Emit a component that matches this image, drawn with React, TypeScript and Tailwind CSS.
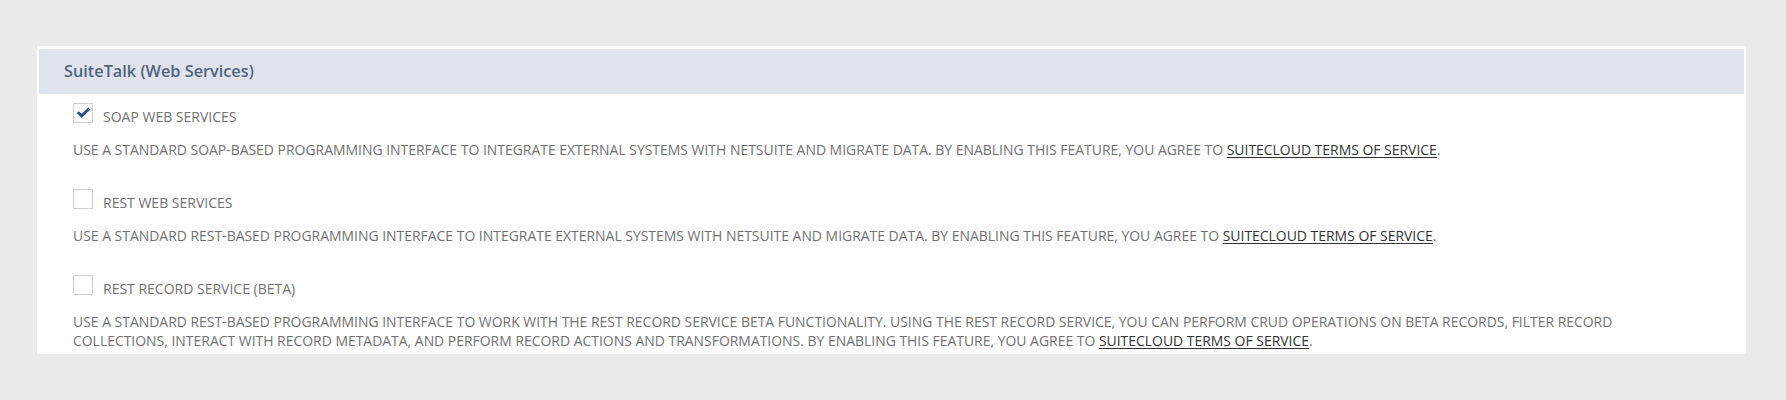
import React from 'react';

interface FeatureRowProps {
    label: string;
    checked?: boolean;
    children: React.ReactNode;
}

const TermsLink = () => (
    <a href="#" className="text-[#333333] underline underline-offset-[2px]">
        SUITECLOUD TERMS OF SERVICE
    </a>
);

const FeatureRow = ({ label, checked, children }: FeatureRowProps) => {
    return (
        <div className="flex flex-col">
            <div className="flex flex-row items-end">
                <span className="relative w-[20px] h-[20px] bg-white border border-[#cfcfcf] shrink-0">
                    {checked && (
                        <svg
                            viewBox="0 0 16 13"
                            className="absolute left-[2px] top-[3px] w-[15px] h-[12px]"
                            fill="#2d4f8e"
                        >
                            <path d="M0.6 6.6 L2.9 4.5 L6 7.4 L13.2 0.6 L15.4 2.8 L6 11.9 Z" />
                        </svg>
                    )}
                </span>
                <span className="ml-[10px] text-[14px] leading-[18px] text-[#717171] -mb-[3px]">{label}</span>
            </div>
            <p className="mt-[17px] text-[13.94px] leading-[19px] text-[#717171] pr-[36px]">{children}</p>
        </div>
    );
};

export default function App() {
    return (
        <div className="w-full h-[400px] bg-[#ebebe9] pt-[46px] pl-[37px] pr-[40px] font-['Open_Sans',sans-serif]">
            <div className="bg-white pt-[3px] px-[2px] h-[308px]">
                <div className="h-[45px] bg-[#dfe4ec] flex items-center pl-[25px]">
                    <h2 className="text-[16.3px] font-semibold text-[#52637f]">SuiteTalk (Web Services)</h2>
                </div>
                <div className="flex flex-col gap-[30px] pl-[34px] pt-[9px]">
                    <FeatureRow label="SOAP WEB SERVICES" checked>
                        USE A STANDARD SOAP-BASED PROGRAMMING INTERFACE TO INTEGRATE EXTERNAL SYSTEMS WITH NETSUITE AND
                        MIGRATE DATA. BY ENABLING THIS FEATURE, YOU AGREE TO <TermsLink />.
                    </FeatureRow>
                    <FeatureRow label="REST WEB SERVICES">
                        USE A STANDARD REST-BASED PROGRAMMING INTERFACE TO INTEGRATE EXTERNAL SYSTEMS WITH NETSUITE AND
                        MIGRATE DATA. BY ENABLING THIS FEATURE, YOU AGREE TO <TermsLink />.
                    </FeatureRow>
                    <FeatureRow label="REST RECORD SERVICE (BETA)">
                        USE A STANDARD REST-BASED PROGRAMMING INTERFACE TO WORK WITH THE REST RECORD SERVICE BETA
                        FUNCTIONALITY. USING THE REST RECORD SERVICE, YOU CAN PERFORM CRUD OPERATIONS ON BETA RECORDS,
                        FILTER RECORD COLLECTIONS, INTERACT WITH RECORD METADATA, AND PERFORM RECORD ACTIONS AND
                        TRANSFORMATIONS. BY ENABLING THIS FEATURE, YOU AGREE TO <TermsLink />.
                    </FeatureRow>
                </div>
            </div>
        </div>
    );
}
